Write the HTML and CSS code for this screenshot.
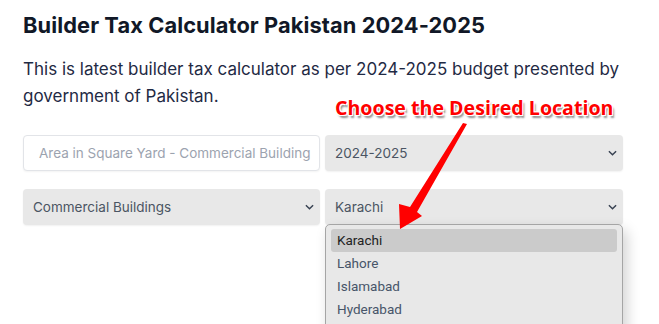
FILE: index.html
```html
<!DOCTYPE html>
<html lang="en">
<head>
<meta charset="utf-8">
<title>Builder Tax Calculator Pakistan 2024-2025</title>
<link rel="stylesheet" href="styles.css">
</head>
<body>
<main class="page">
  <h1 class="title">Builder Tax Calculator Pakistan 2024-2025</h1>
  <p class="intro">This is latest builder tax calculator as per 2024-2025 budget presented by government of Pakistan.</p>
  <div class="form">
    <div class="field input"><span class="placeholder">Area in Square Yard - Commercial Building</span></div>
    <div class="field select"><span>2024-2025</span><svg class="chev" viewBox="0 0 10 6" width="9" height="6"><path d="M1 1l4 4 4-4" fill="none" stroke="#374151" stroke-width="1.6"/></svg></div>
    <div class="field select"><span>Commercial Buildings</span><svg class="chev" viewBox="0 0 10 6" width="9" height="6"><path d="M1 1l4 4 4-4" fill="none" stroke="#374151" stroke-width="1.6"/></svg></div>
    <div class="field select location"><span>Karachi</span><svg class="chev" viewBox="0 0 10 6" width="9" height="6"><path d="M1 1l4 4 4-4" fill="none" stroke="#374151" stroke-width="1.6"/></svg>
      <ul class="menu">
        <li class="active">Karachi</li>
        <li>Lahore</li>
        <li>Islamabad</li>
        <li>Hyderabad</li>
      </ul>
    </div>
  </div>
  <div class="note">Choose the Desired Location</div>
  <svg class="arrow" viewBox="0 0 659 324" width="659" height="324">
    <polygon points="400,229 399,204 410,207 463,123 467,124 417,212 422,216" fill="#ff0000"/>
  </svg>
</main>
</body>
</html>
```

FILE: styles.css
```css
* { box-sizing: border-box; }
html, body { margin: 0; padding: 0; background: #fff; }
body { width: 659px; height: 324px; overflow: hidden; font-family: Inter, "Noto Sans", sans-serif; }
.page { position: relative; width: 659px; height: 324px; padding: 11px 36px 0 23px; }
.title { margin: 0; font-size: 21.8px; font-weight: 700; line-height: 28px; color: #111827; letter-spacing: 0.1px; }
.intro { margin: 17px 0 0; font-size: 17px; line-height: 27px; color: #1f2a44; }
.form { display: grid; grid-template-columns: 297px 298px; column-gap: 5px; row-gap: 18px; margin-top: 25px; }
.field { height: 36px; border-radius: 4px; display: flex; align-items: center; font-size: 13.5px; color: #4b5563; position: relative; }
.input { background: #fff; border: 1px solid #e2e4e8; box-shadow: 0 1px 2px rgba(0,0,0,0.05); padding-left: 15px; overflow: hidden; white-space: nowrap; }
.placeholder { color: #9ca3af; }
.select { background: #e8e8e8; padding: 0 6px 0 10px; justify-content: space-between; box-shadow: 0 1px 2px rgba(0,0,0,0.06); }
.chev { flex: none; }
.menu { position: absolute; left: 0; top: 35px; width: 298px; height: 110px; margin: 0; padding: 4px 5px 0; list-style: none; background: #e8e8e8; border: 1px solid #a5a5a5; border-radius: 5px; box-shadow: 4px 6px 14px rgba(0,0,0,0.18); font-family: Roboto, "Liberation Sans", sans-serif; font-size: 13.5px; color: #475569; z-index: 2; }
.menu li { height: 23px; line-height: 23px; padding-left: 6px; }
.menu li.active { background: #cbcbcb; border-radius: 3px; color: #222; }
.note { position: absolute; left: 335px; top: 95px; font-family: "Open Sans", sans-serif; font-weight: 700; font-size: 19.6px; line-height: 26px; color: #ff0000; text-shadow: -1px -1px 0 #fff, 1px -1px 0 #fff, -1px 1px 0 #fff, 1px 1px 0 #fff, 2px 3px 2px rgba(0,0,0,0.45); z-index: 3; }
.arrow { position: absolute; left: 0; top: 0; z-index: 4; pointer-events: none; }
```
